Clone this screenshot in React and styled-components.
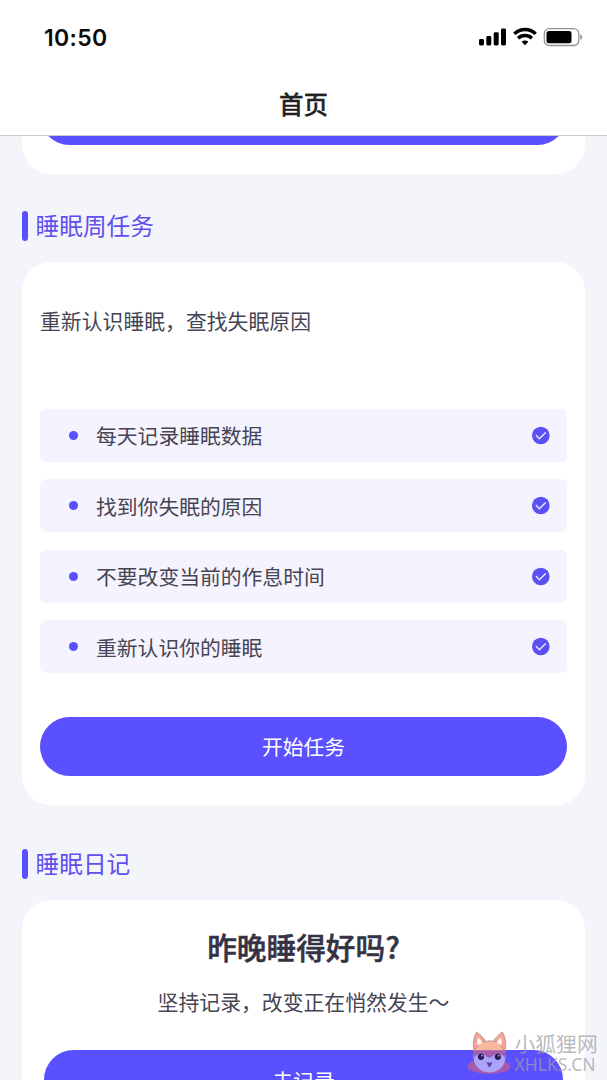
import React from 'react';
import styled, { createGlobalStyle } from 'styled-components';

const WEEK_TASKS = [
  '每天记录睡眠数据',
  '找到你失眠的原因',
  '不要改变当前的作息时间',
  '重新认识你的睡眠',
];

const GlobalStyle = createGlobalStyle`
  * {
    box-sizing: border-box;
  }
  body {
    margin: 0;
    background-color: #f4f5fb;
    font-family: 'Noto Sans CJK SC', sans-serif;
  }
`;

const Screen = styled.div`
  position: relative;
  width: 607px;
  height: 1080px;
  overflow: hidden;
  background-color: #f4f5fb;
`;

const Header = styled.header`
  height: 136px;
  background-color: #fff;
  border-bottom: 1px solid #c9cacf;
`;

const StatusBar = styled.div`
  display: flex;
  align-items: center;
  justify-content: space-between;
  height: 74px;
  padding: 0 23px 0 44px;
`;

const Time = styled.span`
  margin-top: 2px;
  font-family: Inter, sans-serif;
  font-size: 23px;
  font-weight: 600;
  letter-spacing: 0.3px;
  line-height: 28px;
  color: #0b0b0b;
`;

const PageTitle = styled.h1`
  margin: 0;
  font-size: 24.5px;
  font-weight: 500;
  line-height: 60px;
  text-align: center;
  color: #222;
  -webkit-text-stroke: 0.3px #222;
`;

const Content = styled.main`
  padding: 0 22px;
`;

const Card = styled.section`
  padding: ${(props) => props.$padding || '0 18px'};
  height: ${(props) => props.$height}px;
  background-color: #fff;
  border-radius: ${(props) => (props.$cut ? '0 0 29px 29px' : '29px')};
  overflow: hidden;
`;

const ButtonTail = styled.div`
  display: flex;
  align-items: flex-end;
  height: 8.5px;
  overflow: hidden;
`;

const MainButton = styled.button`
  display: block;
  flex-shrink: 0;
  width: 100%;
  height: 58.5px;
  padding: 0;
  border: 0;
  border-radius: 30px;
  background-color: #5b50ff;
  color: #fff;
  font-family: inherit;
  font-size: 20.8px;
  line-height: 58px;
  text-align: center;
`;

const SectionTitle = styled.h2`
  display: flex;
  align-items: flex-start;
  gap: 7.5px;
  height: 30px;
  margin: ${(props) => props.$top}px 0 ${(props) => props.$bottom}px;
  font-size: 23.7px;
  font-weight: 400;
  line-height: 28px;
  color: #5f50ee;
  &::before {
    content: '';
    width: 6px;
    height: 30px;
    border-radius: 3px;
    background-color: #5b50ff;
  }
`;

const Summary = styled.p`
  margin: 0;
  font-size: 20.85px;
  line-height: 30px;
  color: #464553;
`;

const TaskList = styled.ul`
  display: flex;
  flex-direction: column;
  gap: 17.5px;
  margin: 74px 0 44px;
  padding: 0;
  list-style: none;
`;

const TaskItem = styled.li`
  display: flex;
  align-items: center;
  height: 53px;
  padding: 0 17px 0 29px;
  border-radius: 6px;
  background-color: #f5f3fe;
  font-size: 20.8px;
  line-height: 30px;
  color: #464553;
  &::before {
    content: '';
    width: 9px;
    height: 9px;
    margin-right: 18px;
    border-radius: 50%;
    background-color: #5b50ff;
  }
  svg {
    margin-left: auto;
  }
`;

const Question = styled.h3`
  margin: 0;
  font-size: 29.7px;
  font-weight: 500;
  line-height: 40px;
  text-align: center;
  color: #353343;
  -webkit-text-stroke: 0.5px #353343;
`;

const Hint = styled(Summary)`
  margin: 19px 0 34px;
  text-align: center;
`;

const Watermark = styled.div`
  position: absolute;
  left: 467px;
  top: 1031px;
  display: flex;
  gap: 3.5px;
`;

const WatermarkText = styled.div`
  color: rgba(158, 158, 166, 0.72);
  font-size: 20.8px;
  line-height: 24px;
  white-space: nowrap;
  span {
    display: block;
    font-family: 'Noto Sans', sans-serif;
    font-size: 17.5px;
    line-height: 18px;
  }
`;

function StatusIcons() {
  return (
    <svg width="105" height="20" viewBox="0 0 105 20" fill="#000">
      <rect x="0" y="12" width="5" height="6.5" rx="1.4" />
      <rect x="7.3" y="9" width="5" height="9.5" rx="1.4" />
      <rect x="14.7" y="5.2" width="5" height="13.3" rx="1.4" />
      <rect x="22" y="1.5" width="5" height="17" rx="1.4" />
      <g fill="none" stroke="#000" strokeWidth="3.4">
        <path d="M35.3 6.9a15.2 15.2 0 0 1 21.4 0" />
        <path d="M39.1 11.3a9.8 9.8 0 0 1 13.8 0" />
      </g>
      <path d="M42.6 14.8a4.9 4.9 0 0 1 6.8 0L46 18.3z" />
      <rect
        x="65.3"
        y="1.7"
        width="34.5"
        height="16.8"
        rx="5"
        fill="none"
        stroke="#929292"
        strokeWidth="1.3"
      />
      <rect x="67.5" y="4" width="25" height="12.2" rx="2.5" />
      <path d="M101.4 7.2c2.2.8 2.2 4.8 0 5.6z" fill="#858585" />
    </svg>
  );
}

function CheckIcon() {
  return (
    <svg width="19" height="19" viewBox="0 0 19 19" fill="none">
      <circle cx="9.8" cy="9.5" r="8.8" fill="#5b50f4" />
      <path
        d="M5.3 9.5l3.1 3.2 6-6"
        stroke="#e9e5ff"
        strokeWidth="1.4"
        strokeLinecap="round"
        strokeLinejoin="round"
      />
    </svg>
  );
}

function FoxIcon() {
  return (
    <svg width="44" height="46" viewBox="0 0 44 46">
      <ellipse cx="22" cy="35.5" rx="21.5" ry="7.3" fill="#a45aae" />
      <g stroke="#b98a90" strokeWidth="0.8" strokeLinejoin="round">
        <path d="M6.8 20C5.5 12 6.8 6 9.5 1c5 3 8 7 10 11z" fill="#f2a596" />
        <path d="M38.2 20c1.3-8 0-14-2.7-19-5 3-8 7-10 11z" fill="#f2a596" />
        <circle cx="22.5" cy="25.5" r="15.8" fill="#fab99c" />
      </g>
      <path
        d="M10.5 14.5c-.6-3-.3-5.5.8-8 2 2 3.2 3.7 4 5.4zM34.5 14.5c.6-3 .3-5.5-.8-8-2 2-3.2 3.7-4 5.4z"
        fill="#fff5f2"
      />
      <path d="M8 19.3h29a15.8 15.8 0 0 1 1 8H7a15.8 15.8 0 0 1 1-8z" fill="#a45cae" />
      <path
        d="M7 27c1.5-3.5 6-5 10-3.5 3.2 1.3 2.5 3.3 5.5 3.3s2.300-2 5.500-3.300c4-1.500 8.500 0 10 3.500C38 35.500 31 41 22.500 41S7 35.500 7 27z"
        fill="#aaa4fb"
      />
      <circle cx="14" cy="25.8" r="3.1" fill="#281b58" />
      <circle cx="30.8" cy="25.8" r="3.1" fill="#281b58" />
      <circle cx="15" cy="24.7" r="0.8" fill="#d9d5ff" />
      <circle cx="31.8" cy="24.7" r="0.8" fill="#d9d5ff" />
      <path d="M19.300 31.500h6.400l-3.200 5.300z" fill="#62479f" />
    </svg>
  );
}

function App() {
  return (
    <Screen>
      <GlobalStyle />
      <Header>
        <StatusBar>
          <Time>10:50</Time>
          <StatusIcons />
        </StatusBar>
        <PageTitle>首页</PageTitle>
      </Header>
      <Content>
        <Card $cut $height={38}>
          <ButtonTail>
            <MainButton />
          </ButtonTail>
        </Card>
        <SectionTitle $top={36.5} $bottom={21.9}>
          睡眠周任务
        </SectionTitle>
        <Card $height={542.8} $padding="42.2px 18px 0">
          <Summary>重新认识睡眠，查找失眠原因</Summary>
          <TaskList>
            {WEEK_TASKS.map((task) => (
              <TaskItem key={task}>
                {task}
                <CheckIcon />
              </TaskItem>
            ))}
          </TaskList>
          <MainButton>开始任务</MainButton>
        </Card>
        <SectionTitle $top={43.8} $bottom={21}>
          睡眠日记
        </SectionTitle>
        <Card $height={260} $padding="27.5px 22px 0">
          <Question>昨晚睡得好吗?</Question>
          <Hint>坚持记录，改变正在悄然发生～</Hint>
          <MainButton>去记录</MainButton>
        </Card>
      </Content>
      <Watermark>
        <FoxIcon />
        <WatermarkText>
          小狐狸网
          <span>XHLKS.CN</span>
        </WatermarkText>
      </Watermark>
    </Screen>
  );
}

export default App;
